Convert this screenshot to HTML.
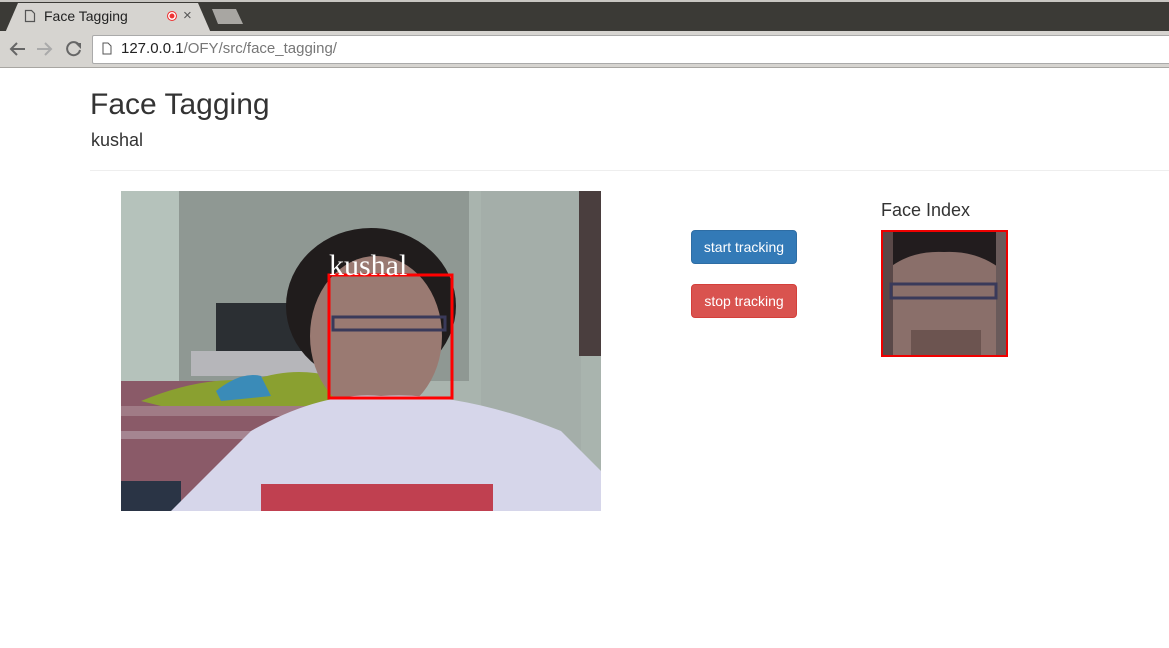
<!DOCTYPE html>
<html><head><meta charset="utf-8"><style>
body{margin:0;width:1169px;height:648px;overflow:hidden;background:#fff;font-family:"Liberation Sans",sans-serif;position:relative}
.abs{position:absolute}
.btn{position:absolute;width:106px;height:34px;border-radius:4px;color:#fff;font-size:14px;line-height:32px;text-align:center;box-sizing:border-box}
</style></head><body>
<div class="abs" style="left:0;top:0;width:1169px;height:31px;background:#3b3a36"></div>
<div class="abs" style="left:0;top:0;width:1169px;height:2px;background:#c8c6c2"></div>
<svg class="abs" style="left:0;top:0" width="260" height="34"><polygon points="5,33 18,3 198,3 211,33" fill="#d6d4d0"/><polygon points="212,9 236,9 243,24 218,24" fill="#a8a6a2"/></svg>
<svg class="abs" style="left:24px;top:9px" width="12" height="14"><path d="M1.5 1.5h6l3 3v8h-9z" fill="none" stroke="#555" stroke-width="1.2"/></svg>
<div class="abs" style="left:44px;top:8px;font-size:14px;color:#222">Face Tagging</div>
<div class="abs" style="left:167px;top:11px;width:8px;height:8px;border-radius:50%;background:#e33;border:1.5px solid #e33;box-shadow:0 0 0 1.5px #fff inset"></div>
<div class="abs" style="left:183px;top:7px;font-size:15px;color:#555">×</div>
<div class="abs" style="left:0;top:31px;width:1169px;height:36px;background:#d6d4d0"></div>
<div class="abs" style="left:0;top:67px;width:1169px;height:1px;background:#a8a6a2"></div>
<svg class="abs" style="left:8px;top:40px" width="76" height="18">
<path d="M17 9H3M9 3L3 9l6 6" fill="none" stroke="#666" stroke-width="2"/>
<path d="M29 9h14M37 3l6 6-6 6" fill="none" stroke="#aaa" stroke-width="2"/>
<path d="M71 5A6.5 6.5 0 1 0 72 10" fill="none" stroke="#666" stroke-width="2"/>
<path d="M67 3h6v6z" fill="#666"/>
</svg>
<div class="abs" style="left:92px;top:35px;width:1080px;height:27px;background:#fff;border:1px solid #aaa;border-radius:2px"></div>
<svg class="abs" style="left:102px;top:42px" width="10" height="13"><path d="M1 1h5l3 3v8h-8z" fill="none" stroke="#555" stroke-width="1"/></svg>
<div class="abs" style="left:121px;top:40px;font-size:15px;color:#222">127.0.0.1<span style="color:#777">/OFY/src/face_tagging/</span></div>
<div class="abs" style="left:90px;top:88px;font-size:30px;color:#333">Face Tagging</div>
<div class="abs" style="left:91px;top:130px;font-size:18px;color:#333">kushal</div>
<div class="abs" style="left:90px;top:170px;width:1079px;height:1px;background:#eee"></div>
<svg class="abs" style="left:121px;top:191px" width="480" height="320">
<rect width="480" height="320" fill="#a9b4ae"/>
<rect width="58" height="320" fill="#b5c2bb"/>
<rect x="58" y="0" width="290" height="190" fill="#8f9893"/>
<rect x="360" y="0" width="100" height="320" fill="#a4aea9"/>
<rect x="458" y="0" width="22" height="165" fill="#4a3e3e"/>
<rect x="95" y="112" width="110" height="58" fill="#2b2f33"/>
<rect x="70" y="160" width="150" height="25" fill="#b6b6ba"/>
<rect x="0" y="190" width="250" height="130" fill="#8a5a68"/>
<rect x="0" y="215" width="250" height="10" fill="#a07b86"/>
<rect x="0" y="240" width="250" height="8" fill="#a58591"/>
<path d="M20 210 Q80 185 130 190 Q170 175 210 185 L230 215 L40 215z" fill="#8aa030"/>
<path d="M95 200 Q120 180 140 185 L150 205 L100 210z" fill="#3a8bb8"/>
<rect x="0" y="290" width="60" height="30" fill="#2a3445"/>
<ellipse cx="250" cy="115" rx="85" ry="78" fill="#201c1c"/>
<ellipse cx="255" cy="145" rx="66" ry="80" fill="#9a7a72"/>
<path d="M130 240 Q200 200 260 205 Q340 200 440 240 L480 280 L480 320 L50 320z" fill="#d6d6ea"/>
<rect x="140" y="293" width="232" height="27" fill="#c04050"/>
<rect x="212" y="126" width="112" height="13" fill="none" stroke="#3a3a5a" stroke-width="3"/>
<rect x="208" y="84" width="123" height="123" fill="none" stroke="#f00" stroke-width="3"/>
<text x="208" y="84" font-family="Liberation Serif,serif" font-size="30" fill="#fff">kushal</text>
</svg>
<div class="btn" style="left:691px;top:230px;background:#337ab7;border:1px solid #2e6da4">start tracking</div>
<div class="btn" style="left:691px;top:284px;background:#d9534f;border:1px solid #d43f3a">stop tracking</div>
<div class="abs" style="left:881px;top:200px;font-size:18px;color:#333">Face Index</div>
<svg class="abs" style="left:881px;top:230px" width="127" height="127">
<rect width="127" height="127" fill="#8a6f6a"/>
<path d="M0 0H127V45Q100 20 63 22Q25 20 0 45z" fill="#221c1e"/>
<rect x="0" y="0" width="12" height="127" fill="#5a4848"/>
<rect x="115" y="0" width="12" height="127" fill="#6a5a5a"/>
<rect x="10" y="54" width="105" height="14" fill="none" stroke="#3a3a5a" stroke-width="3"/>
<rect x="30" y="100" width="70" height="27" fill="#6c5450"/>
<rect x="1" y="1" width="125" height="125" fill="none" stroke="#e00" stroke-width="2"/>
</svg>
</body></html>
